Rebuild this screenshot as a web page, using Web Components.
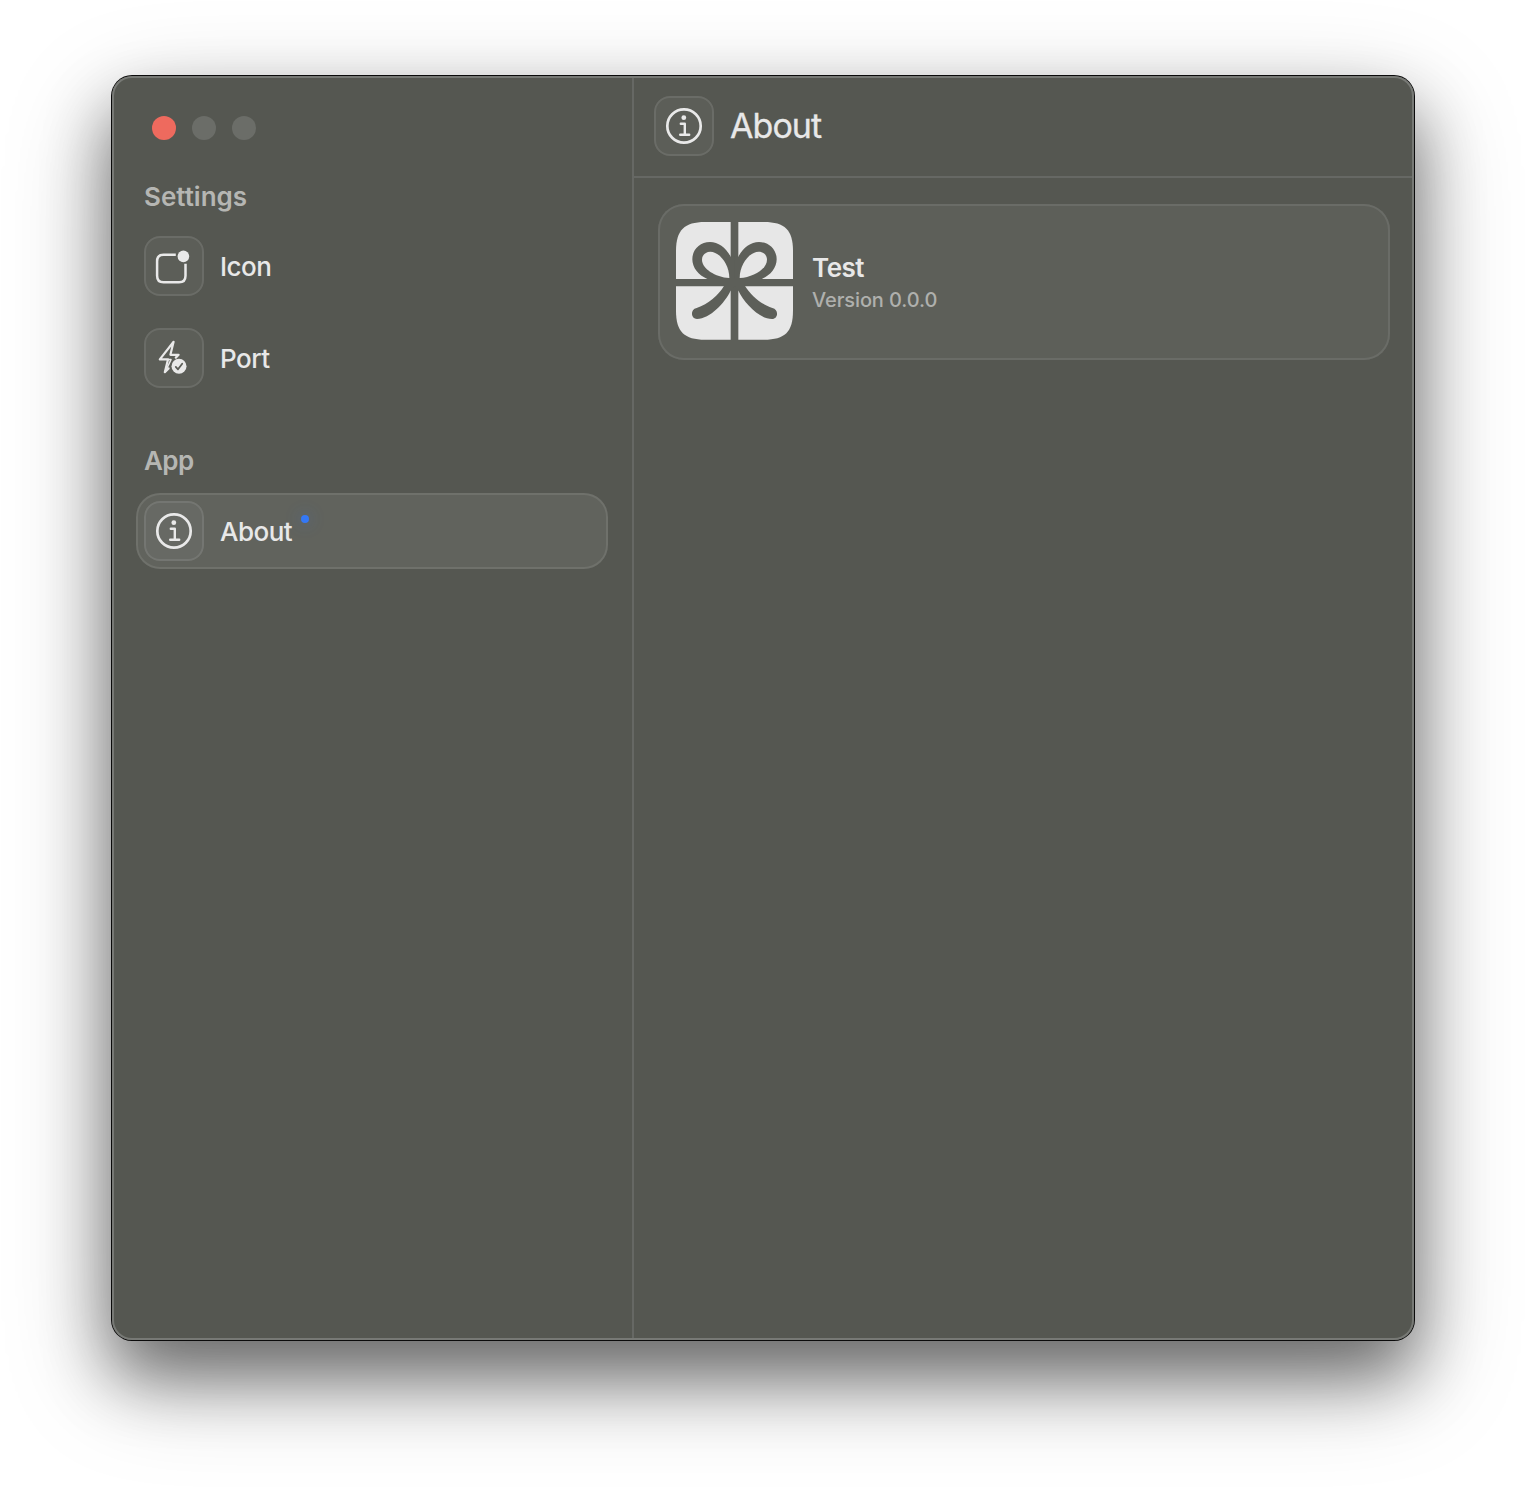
<!DOCTYPE html>
<html lang="en">
<head>
<meta charset="utf-8">
<title>Settings</title>
<style>
html{background:#fff}
body{margin:0;width:1526px;height:1488px;overflow:hidden;font-family:Inter,"Liberation Sans",sans-serif;color:#e8e8e8}
</style>
</head>
<body>
<settings-window></settings-window>
<script>
const icons={
 info:`<svg viewBox="0 0 60 60"><circle cx="30" cy="30" r="16.7" fill="none" stroke="#e9e9e9" stroke-width="2.7"/><circle cx="29.8" cy="21.7" r="2.4" fill="#e9e9e9"/><path d="M26.8 27.7h4v11M26.2 38.8h9" fill="none" stroke="#e9e9e9" stroke-width="2.4" stroke-linecap="round" stroke-linejoin="round"/></svg>`,
 badge:`<svg viewBox="0 0 60 60"><path d="M31.8 18.8H19.5q-6.4 0-6.4 6.4v14.5q0 6.6 6.4 6.6h15.6q6.4 0 6.4-6.6V27.8" fill="none" stroke="#e9e9e9" stroke-width="2.5"/><circle cx="39.4" cy="20.4" r="5.8" fill="#e9e9e9"/></svg>`,
 port:`<svg viewBox="0 0 60 60"><path d="M29.6 13.8L15.8 31.4h8.2L20.8 44.2L24.6 40.4M29.6 13.8L26.4 26.8h8.2L31.8 29.6" fill="none" stroke="#e9e9e9" stroke-width="2.2" stroke-linejoin="round" stroke-linecap="round"/><path d="M24 31.4l3 .2-6 12.6" fill="none" stroke="#e9e9e9" stroke-width="1.5" stroke-linejoin="round"/><circle cx="35" cy="38.3" r="7.5" fill="#e9e9e9"/><path d="M31.8 38.9l2.2 2.4 4.2-5.6" fill="none" stroke="#5c5e58" stroke-width="1.8" stroke-linecap="round" stroke-linejoin="round"/></svg>`
};
class IconTile extends HTMLElement{
 connectedCallback(){
  this.attachShadow({mode:'open'}).innerHTML=`<style>
  :host{display:block;box-sizing:border-box;flex:none;width:60px;height:60px;border-radius:16px;background:rgba(255,255,255,.045);box-shadow:inset 0 0 0 2px rgba(255,255,255,.09)}
  svg{display:block;width:60px;height:60px}</style>${icons[this.getAttribute('name')]}`;
 }
}
customElements.define('icon-tile',IconTile);

class TrafficLights extends HTMLElement{
 connectedCallback(){
  this.attachShadow({mode:'open'}).innerHTML=`<style>
  :host{display:flex;gap:16px;padding:40px 0 0 40px}
  i{width:24px;height:24px;border-radius:50%;background:#6b6d68}
  i.close{background:#ee6a5e}</style><i class="close"></i><i></i><i></i>`;
 }
}
customElements.define('traffic-lights',TrafficLights);

class NavSection extends HTMLElement{
 connectedCallback(){
  this.attachShadow({mode:'open'}).innerHTML=`<style>
  :host{display:flex;flex-direction:column;gap:16px;padding:0 24px}
  h2{margin:0 0 -1px 8px;font-size:26px;line-height:32px;font-weight:600;color:#b5b6b3;letter-spacing:var(--heading-track,0)}
  </style><h2>${this.getAttribute('heading')}</h2><slot></slot>`;
 }
}
customElements.define('nav-section',NavSection);

class NavItem extends HTMLElement{
 connectedCallback(){
  this.attachShadow({mode:'open'}).innerHTML=`<style>
  :host{display:flex;align-items:center;gap:16px;box-sizing:border-box;height:76px;padding:8px;border-radius:24px;font-size:26px;line-height:32px;font-weight:500;letter-spacing:-.5px}
  :host([selected]){background:#61635d;box-shadow:inset 0 0 0 2px rgba(255,255,255,.09)}
  .label{position:relative;padding-top:2px}
  .dot{position:absolute;left:calc(100% + 9px);top:1px;width:8px;height:8px;border-radius:50%;background:#3478f6;box-shadow:0 0 16px 3px rgba(52,120,246,.16)}
  </style><icon-tile name="${this.getAttribute('icon')}"></icon-tile><span class="label"><slot></slot>${this.hasAttribute('selected')?'<i class="dot"></i>':''}</span>`;
 }
}
customElements.define('nav-item',NavItem);

class PaneHeader extends HTMLElement{
 connectedCallback(){
  this.attachShadow({mode:'open'}).innerHTML=`<style>
  :host{display:flex;align-items:center;gap:16px;box-sizing:border-box;height:102px;padding:0 20px;border-bottom:2px solid #666864;font-size:34px;line-height:40px;letter-spacing:-.95px;-webkit-text-stroke:.3px currentColor}
  </style><icon-tile name="info"></icon-tile><slot></slot>`;
 }
}
customElements.define('pane-header',PaneHeader);

class GiftLogo extends HTMLElement{
 connectedCallback(){
  this.attachShadow({mode:'open'}).innerHTML=`<style>:host{display:block;flex:none;width:117px;height:118px;margin-top:-2px}svg{display:block;width:117px;height:118px}</style>
  <svg viewBox="78 78 351 354" preserveAspectRatio="none">
  <path fill="#e7e7e7" d="M165 78H342C405 78 429 103 429 165V344C429 407 405 431 342 431H165C103 431 78 407 78 344V165C78 103 103 78 165 78Z"/>
  <g fill="#5d5f59"><path d="M242 76h23v358h-23zM76 249h355v22H76z"/>
  <g id="half"><path d="M242 182C228 155 205 138 180 138C150 138 127 160 127 190C127 215 145 238 172 249H254V182Z"/>
  <path fill="#e7e7e7" d="M238 246C238 205 208 167 181 167C167 167 156 177 156 191C156 218 195 243 238 246Z"/>
  <path d="M222 270C205 297 175 325 140 336C120 340 122 369 141 369C180 369 225 320 241 286L254 270Z"/></g>
  <use href="#half" transform="translate(507 0) scale(-1 1)"/></g></svg>`;
 }
}
customElements.define('gift-logo',GiftLogo);

class AboutCard extends HTMLElement{
 connectedCallback(){
  this.attachShadow({mode:'open'}).innerHTML=`<style>
  :host{display:flex;align-items:center;gap:19px;box-sizing:border-box;height:156px;margin:26px 24px 0;padding:0 18px;border-radius:26px;background:#5d5f59;box-shadow:inset 0 0 0 2px #6a6c67}
  .text{display:flex;flex-direction:column;padding-top:2px}
  slot{display:block}
  .name{font-size:26px;line-height:34px;font-weight:600;letter-spacing:-.5px}
  .version{font-size:20px;line-height:30px;font-weight:500;color:#afb0ad;letter-spacing:-.1px}
  </style><gift-logo></gift-logo><div class="text"><slot class="name" name="name"></slot><slot class="version" name="version"></slot></div>`;
 }
}
customElements.define('about-card',AboutCard);

class SettingsWindow extends HTMLElement{
 connectedCallback(){
  this.attachShadow({mode:'open'}).innerHTML=`<style>
  :host{display:block;padding:76px 112px}
  .window{position:relative;display:flex;box-sizing:border-box;width:1302px;height:1264px;border-radius:20px;background:#555751;box-shadow:0 0 0 1px #0b0b0b,0 36px 66px rgba(0,0,0,.46),0 36px 106px rgba(0,0,0,.28)}
  .window::after{content:"";position:absolute;inset:0;border-radius:20px;box-shadow:inset 0 0 0 2px #777975;pointer-events:none}
  aside{box-sizing:border-box;width:522px;border-right:2px solid #666864}
  main{flex:1}
  nav-section:nth-of-type(1){margin-top:41px}
  nav-section:nth-of-type(2){margin-top:49px;--heading-track:-.6px}
  nav-section:nth-of-type(2) nav-item{margin-top:1px}
  </style><div class="window"><aside><traffic-lights></traffic-lights>
  <nav-section heading="Settings"><nav-item icon="badge">Icon</nav-item><nav-item icon="port">Port</nav-item></nav-section>
  <nav-section heading="App"><nav-item icon="info" selected>About</nav-item></nav-section></aside>
  <main><pane-header>About</pane-header><about-card><span slot="name">Test</span><span slot="version">Version 0.0.0</span></about-card></main></div>`;
 }
}
customElements.define('settings-window',SettingsWindow);
</script>
</body>
</html>
